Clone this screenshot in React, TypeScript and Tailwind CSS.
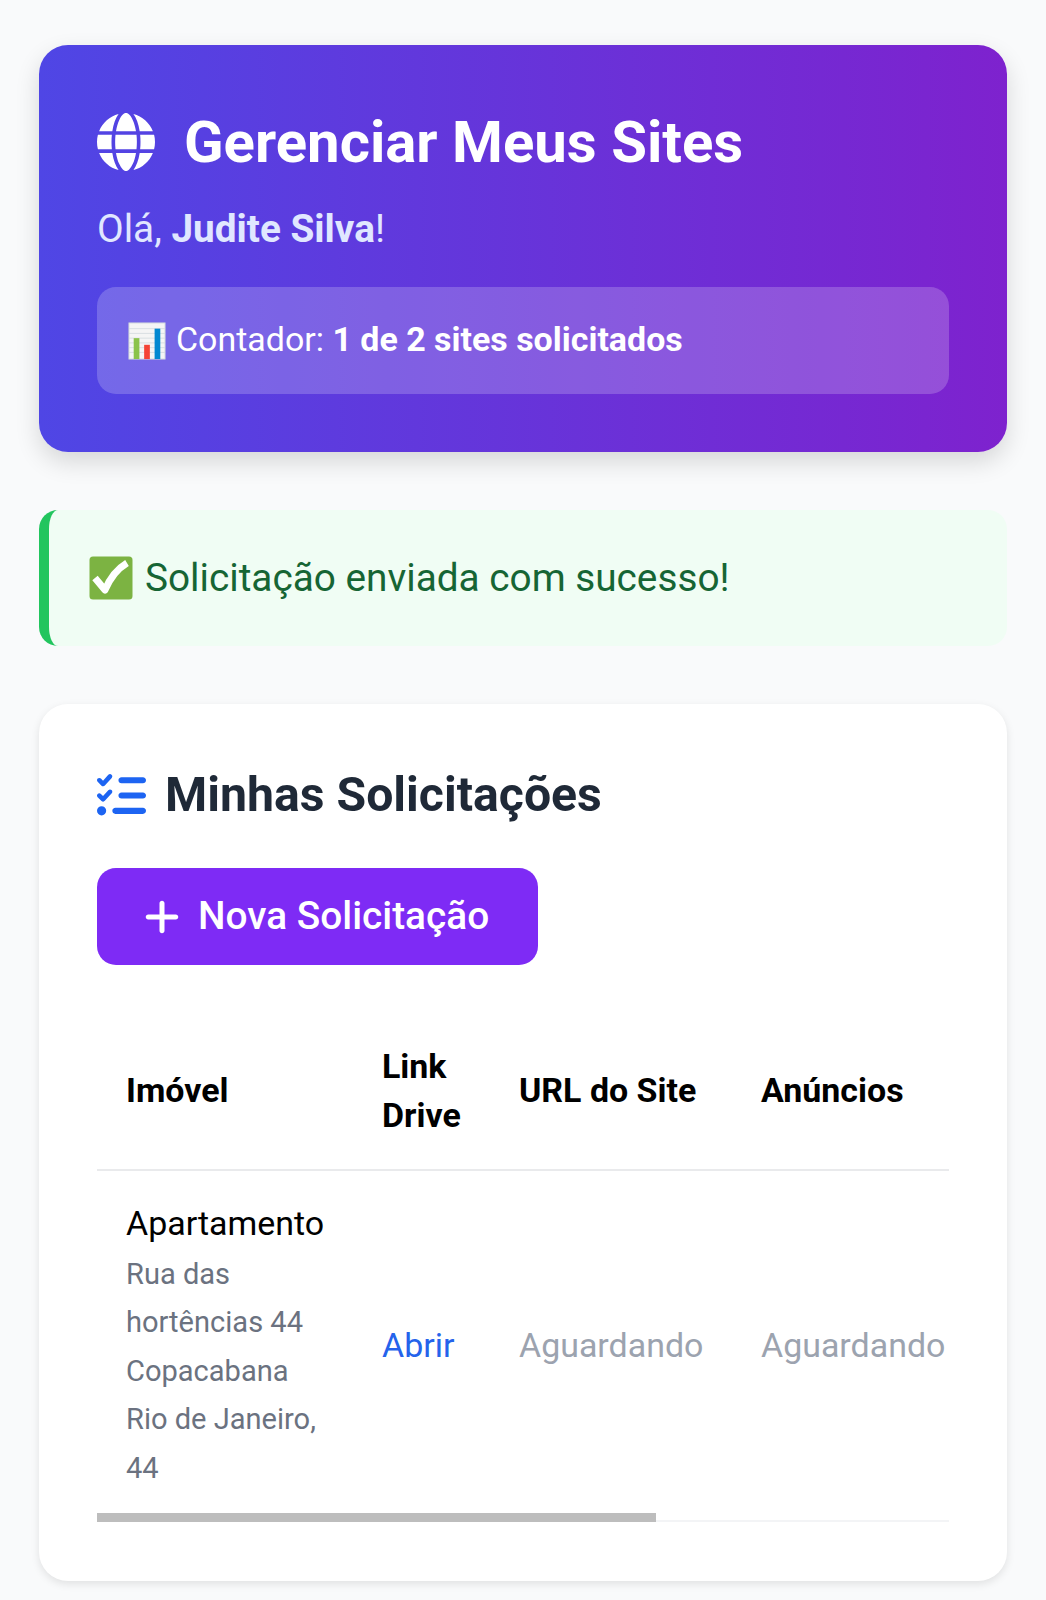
import { FaGlobe, FaListCheck, FaPlus } from "react-icons/fa6";

function ChartEmoji() {
  return (
    <svg width="38" height="38" viewBox="0 0 40 40" className="shrink-0">
      <rect x="1" y="1" width="38" height="38" fill="#f5f5f5" stroke="#cfd8dc" strokeWidth="1" />
      <path d="M1 7H39M1 12H39M1 17H39M1 22H39M1 27H39M1 32H39" stroke="#d7dde0" strokeWidth="1" />
      <rect x="6" y="17" width="6" height="22" fill="#8bc34a" />
      <rect x="17" y="24" width="6" height="15" fill="#f44336" />
      <rect x="28" y="7" width="6" height="32" fill="#0288d1" />
    </svg>
  );
}

function CheckEmoji() {
  return (
    <svg width="44" height="44" viewBox="0 0 44 44" className="shrink-0">
      <rect x="0.5" y="0.5" width="43" height="43" rx="3.5" fill="#7cb342" />
      <path d="M6 22L16 34C21 22 28 13 38 7" fill="none" stroke="#fff" strokeWidth="7" strokeLinejoin="round" />
    </svg>
  );
}

export default function App() {
  return (
    <div className="min-h-[1600px] bg-[#f9fafb] px-[39px] pt-[45px] font-['Roboto',sans-serif]">
      <div className="h-[407px] rounded-[29px] bg-linear-to-r/srgb from-[#4f46e5] to-[#7e22ce] p-[58px] text-white shadow-[0_10px_24px_rgba(0,0,0,0.14)]">
        <h1 className="flex h-[78px] items-center gap-[29px] text-[58.1px] leading-[62px] font-bold">
          <FaGlobe className="size-[58px] shrink-0" />
          Gerenciar Meus Sites
        </h1>
        <p className="mt-[19px] text-[38.75px] leading-[58px] text-[#e0e7ff]">
          Olá, <strong className="font-bold">Judite Silva</strong>!
        </p>
        <div className="mt-[29px] flex h-[107px] items-center gap-[10px] rounded-[19px] bg-white/20 pr-[29px] pl-[31px] text-[33.95px]">
          <ChartEmoji />
          <span>
            Contador: <strong className="font-bold">1 de 2 sites solicitados</strong>
          </span>
        </div>
      </div>

      <div className="mt-[58px] flex h-[136px] items-center gap-[12px] rounded-[19px] border-l-[10px] border-[#22c55e] bg-[#f0fdf4] pl-[40px] text-[38.75px] text-[#166534]">
        <CheckEmoji />
        <span>Solicitação enviada com sucesso!</span>
      </div>

      <div className="mt-[58px] h-[877px] rounded-[29px] bg-white px-[58px] pt-[58px] shadow-[0_3px_8px_rgba(0,0,0,0.1)]">
        <h2 className="flex h-[66px] items-center gap-[19px] text-[48.2px] font-bold text-[#1f2937]">
          <FaListCheck className="size-[49px] shrink-0 text-[#1d64f2]" />
          Minhas Solicitações
        </h2>
        <button className="mt-[40px] flex h-[97px] w-[441px] items-center gap-[16px] rounded-[19px] bg-[#7e2bf5] pl-[45px] text-[38.8px] font-medium text-white">
          <FaPlus className="size-[40px] shrink-0" />
          Nova Solicitação
        </button>

        <div className="relative mt-[48px] overflow-hidden">
          <table className="w-[875px] table-fixed border-collapse text-left text-[33.95px]">
            <thead>
              <tr className="border-b-2 border-[#e9eaec] text-black">
                <th className="w-[256px] px-[29px] pt-[30px] pb-[29px] font-bold">Imóvel</th>
                <th className="w-[137px] pt-[30px] pb-[29px] pl-[29px] leading-[48.5px] font-bold">Link Drive</th>
                <th className="w-[242px] px-[29px] pt-[30px] pb-[29px] font-bold">URL do Site</th>
                <th className="w-[240px] px-[29px] pt-[30px] pb-[29px] font-bold">Anúncios</th>
              </tr>
            </thead>
            <tbody>
              <tr>
                <td className="px-[29px] pt-[29px] pb-[30px] align-middle">
                  <div className="text-black leading-[48.5px]">Apartamento</div>
                  <div className="mt-[1px] w-[205px] text-[29.05px] leading-[48.5px] text-[#6b7280]">
                    Rua das hortências 44 Copacabana Rio de Janeiro, 44
                  </div>
                </td>
                <td className="pb-[1px] pl-[29px] align-middle text-[#2563eb]">Abrir</td>
                <td className="px-[29px] pb-[1px] align-middle text-[#9ca3af]">Aguardando</td>
                <td className="pb-[1px] pl-[29px] align-middle text-[#9ca3af]">Aguardando</td>
              </tr>
            </tbody>
          </table>
          <div className="absolute bottom-0 left-0 h-[2px] w-full bg-[#f3f4f6]" />
          <div className="absolute bottom-0 left-0 h-[9px] w-[559px] bg-[#bdbdbd]" />
        </div>
      </div>
    </div>
  );
}
